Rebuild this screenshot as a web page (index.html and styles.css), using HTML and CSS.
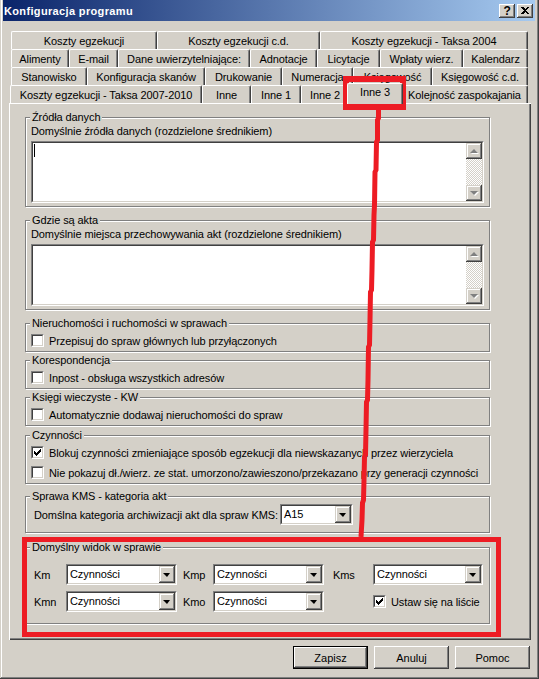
FILE: index.html
```html
<!DOCTYPE html>
<html lang="pl">
<head>
    <meta charset="UTF-8">
    <title>Konfiguracja programu</title>
    <link rel="stylesheet" href="styles.css">
</head>
<body>

<div class="window">
    <div class="titlebar">
        <span class="title">Konfiguracja programu</span>
        <div class="title-buttons">
            <div class="tb-btn">?</div>
            <div class="tb-btn">
                <svg width="8" height="7" viewBox="0 0 8 7" shape-rendering="crispEdges">
                    <path d="M0 0h2l2 2 2-2h2L5 3.5 8 7H6L4 5 2 7H0l3-3.5z" fill="#000"/>
                </svg>
            </div>
        </div>
    </div>

    <!-- zakładki, cztery rzędy -->
    <div class="tabs">
        <div class="tab-row row1">
            <div class="tab">Koszty egzekucji</div>
            <div class="tab">Koszty egzekucji c.d.</div>
            <div class="tab">Koszty egzekucji - Taksa 2004</div>
        </div>
        <div class="tab-row row2">
            <div class="tab">Alimenty</div>
            <div class="tab">E-mail</div>
            <div class="tab">Dane uwierzytelniające:</div>
            <div class="tab">Adnotacje</div>
            <div class="tab">Licytacje</div>
            <div class="tab">Wpłaty wierz.</div>
            <div class="tab">Kalendarz</div>
        </div>
        <div class="tab-row row3">
            <div class="tab">Stanowisko</div>
            <div class="tab">Konfiguracja skanów</div>
            <div class="tab">Drukowanie</div>
            <div class="tab">Numeracja</div>
            <div class="tab">Księgowość</div>
            <div class="tab">Księgowość c.d.</div>
        </div>
        <div class="tab-row row4">
            <div class="tab">Koszty egzekucji - Taksa 2007-2010</div>
            <div class="tab">Inne</div>
            <div class="tab">Inne 1</div>
            <div class="tab">Inne 2</div>
            <div class="tab active">Inne 3</div>
            <div class="tab">Kolejność zaspokajania</div>
        </div>
    </div>

    <div class="panel">
        <fieldset class="group">
            <legend>Źródła danych</legend>
            <div class="label">Domyślnie źródła danych (rozdzielone średnikiem)</div>
            <div class="memo">
                <div class="memo-in">
                    <div class="memo-text"><span class="caret"></span></div>
                    <div class="vscroll">
                        <div class="sb-btn"><span class="arrow-up"></span></div>
                        <div class="sb-track"></div>
                        <div class="sb-btn"><span class="arrow-down"></span></div>
                    </div>
                </div>
            </div>
        </fieldset>

        <fieldset class="group mt-7">
            <legend>Gdzie są akta</legend>
            <div class="label">Domyślnie miejsca przechowywania akt (rozdzielone średnikiem)</div>
            <div class="memo">
                <div class="memo-in">
                    <div class="memo-text"></div>
                    <div class="vscroll">
                        <div class="sb-btn"><span class="arrow-up"></span></div>
                        <div class="sb-track"></div>
                        <div class="sb-btn"><span class="arrow-down"></span></div>
                    </div>
                </div>
            </div>
        </fieldset>

        <fieldset class="group checks mt-7">
            <legend>Nieruchomości i ruchomości w sprawach</legend>
            <div class="check-row">
                <span class="checkbox"><span></span></span>
                Przepisuj do spraw głównych lub przyłączonych
            </div>
        </fieldset>

        <fieldset class="group checks mt-2">
            <legend>Korespondencja</legend>
            <div class="check-row">
                <span class="checkbox"><span></span></span>
                Inpost - obsługa wszystkich adresów
            </div>
        </fieldset>

        <fieldset class="group checks mt-2">
            <legend>Księgi wieczyste - KW</legend>
            <div class="check-row">
                <span class="checkbox"><span></span></span>
                Automatycznie dodawaj nieruchomości do spraw
            </div>
        </fieldset>

        <fieldset class="group checks mt-3">
            <legend>Czynności</legend>
            <div class="check-row">
                <span class="checkbox"><span><svg width="7" height="7" viewBox="0 0 7 7" shape-rendering="crispEdges"><path d="M0 2h1v1h1v1h1V3h1V2h1V1h1V0h1v3H6v1H5v1H4v1H3v1H2V6H1V5H0z"/></svg></span></span>
                Blokuj czynności zmieniające sposób egzekucji dla niewskazanych przez wierzyciela
            </div>
            <div class="check-row">
                <span class="checkbox"><span></span></span>
                Nie pokazuj dł./wierz. ze stat. umorzono/zawieszono/przekazano przy generacji czynności
            </div>
        </fieldset>

        <fieldset class="group mt-6 kms">
            <legend>Sprawa KMS - kategoria akt</legend>
            <div class="kms-row">
                <span class="kms-label">Domślna kategoria archiwizacji akt dla spraw KMS:</span>
                <div class="combo combo-short">
                    <div class="combo-in">
                        <span class="combo-val">A15</span>
                        <span class="combo-btn"><span class="arrow-dd"></span></span>
                    </div>
                </div>
            </div>
        </fieldset>

        <fieldset class="group mt-8 view">
            <legend>Domyślny widok w sprawie</legend>
            <div class="view-grid">
                <span class="lbl">Km</span>
                <div class="combo"><div class="combo-in"><span class="combo-val">Czynności</span><span class="combo-btn"><span class="arrow-dd"></span></span></div></div>
                <span class="lbl lbl-mid">Kmp</span>
                <div class="combo"><div class="combo-in"><span class="combo-val">Czynności</span><span class="combo-btn"><span class="arrow-dd"></span></span></div></div>
                <span class="lbl lbl-end">Kms</span>
                <div class="combo"><div class="combo-in"><span class="combo-val">Czynności</span><span class="combo-btn"><span class="arrow-dd"></span></span></div></div>

                <span class="lbl">Kmn</span>
                <div class="combo"><div class="combo-in"><span class="combo-val">Czynności</span><span class="combo-btn"><span class="arrow-dd"></span></span></div></div>
                <span class="lbl lbl-mid">Kmo</span>
                <div class="combo"><div class="combo-in"><span class="combo-val">Czynności</span><span class="combo-btn"><span class="arrow-dd"></span></span></div></div>
                <span class="lbl-end"></span>
                <div class="check-row">
                    <span class="checkbox"><span><svg width="7" height="7" viewBox="0 0 7 7" shape-rendering="crispEdges"><path d="M0 2h1v1h1v1h1V3h1V2h1V1h1V0h1v3H6v1H5v1H4v1H3v1H2V6H1V5H0z"/></svg></span></span>
                    Ustaw się na liście
                </div>
            </div>
        </fieldset>
    </div>

    <div class="buttons">
        <button class="btn default">Zapisz</button>
        <button class="btn">Anuluj</button>
        <button class="btn">Pomoc</button>
    </div>

    <!-- czerwone zaznaczenia -->
    <svg class="marks" width="539" height="679" viewBox="0 0 539 679">
        <rect x="346" y="79" width="57" height="28" fill="none" stroke="#ed1c24" stroke-width="6"/>
        <polyline fill="none" stroke="#ed1c24" stroke-width="5"
            points="378.5,108 378.5,118 377.5,120 377.5,140 376.5,142 376,170 375,172 374.5,205 374,215 373.5,240 372.5,242 372,270 371.5,290 370.5,292 370,320 369.5,345 368.5,347 368,380 367.5,400 366.5,402 366,430 365.5,455 364.5,457 364,480 363.5,500 362.5,503 362,520 361,537"/>
        <rect x="24.5" y="539.5" width="474" height="95" fill="none" stroke="#ed1c24" stroke-width="5"/>
    </svg>
</div>

</body>
</html>
```

FILE: styles.css
```css
* { box-sizing: border-box; }

body {
    margin: 0;
    background: #d4d0c8;
    font-family: "Liberation Sans", Arial, sans-serif;
    font-size: 11px;
    letter-spacing: -0.1px;
    color: #000;
}

.window {
    position: relative;
    width: 539px;
    height: 679px;
    padding: 0 4px 4px 3px;
    background: #d4d0c8;
    box-shadow: inset -1px -1px #404040, inset 1px 0 #d4d0c8, inset -2px -2px #808080, inset 2px 0 #fff;
}

/* Title bar */
.titlebar {
    height: 21px;
    display: flex;
    align-items: center;
    padding: 0 2px 0 1px;
    background: linear-gradient(to right, #0a246a, #a6caf0);
}
.title { color: #fff; font-weight: bold; letter-spacing: 0.35px; }
.title-buttons { margin-left: auto; display: flex; gap: 2px; }
.tb-btn {
    width: 16px;
    height: 14px;
    display: flex;
    align-items: center;
    justify-content: center;
    font-weight: bold;
    font-size: 12px;
    line-height: 14px;
    background: #d4d0c8;
    box-shadow: inset -1px -1px #404040, inset 1px 1px #fff, inset -2px -2px #808080;
}

/* Tabs */
.tabs { margin: 10px 0 0 7px; }
.tab-row { display: grid; height: 18px; }
.row1 { margin-left: 1px; grid-template-columns: 146px 163px 208px; }
.row2 { margin-left: 1px; grid-template-columns: 58px 49px 132px 67px 63px 83px 65px; }
.row3 { margin-left: 1px; grid-template-columns: 76px 118px 77px 71px 79px 96px; }
.row4 { grid-template-columns: 192px 49px 50px 48px 52px 127px; }
.tab {
    height: 18px;
    padding-top: 1px;
    border-top: 1px solid #fff;
    border-left: 1px solid #fff;
    border-right: 1px solid #404040;
    border-radius: 2px 2px 0 0;
    box-shadow: inset -1px 0 #808080;
    text-align: center;
    line-height: 16px;
    white-space: nowrap;
    overflow: hidden;
}
.tab.active {
    position: relative;
    z-index: 1;
    height: 21px;
    margin: -2px -2px -1px;
    padding-top: 0;
    background: #d4d0c8;
}

/* Tab page */
.panel {
    width: 522px;
    height: 537px;
    margin-left: 6px;
    padding: 8px 0 0 16px;
    box-shadow: inset 1px 1px #fff, inset -1px -1px #404040, inset -2px -2px #808080;
}

.group {
    width: 465px;
    min-width: 0;
    margin: 0;
    padding: 1px 5px 3px;
    border: 1px solid #808080;
    box-shadow: 1px 1px #fff, inset 1px 1px #fff;
}
.group legend {
    margin-left: -1px;
    padding: 0 2px;
    line-height: 13px;
    background: #d4d0c8;
}
.mt-2 { margin-top: 2px; }
.mt-3 { margin-top: 3px; }
.mt-6 { margin-top: 6px; }
.mt-7 { margin-top: 7px; }
.mt-8 { margin-top: 8px; }

.label { line-height: 13px; white-space: nowrap; }

/* Multi-line edit with scrollbar */
.memo {
    height: 62px;
    margin-top: 3px;
    border: 1px solid;
    border-color: #808080 #fff #fff #808080;
}
.memo-in {
    height: 100%;
    display: flex;
    border: 1px solid;
    border-color: #404040 #d4d0c8 #d4d0c8 #404040;
    background: #fff;
}
.memo-text { flex: 1; }
.caret { display: block; width: 1px; height: 13px; margin: 1px 0 0 1px; background: #000; }
.vscroll { width: 16px; display: flex; flex-direction: column; }
.sb-track {
    flex: 1;
    background: conic-gradient(#fff 25%, #d4d0c8 0 50%, #fff 0 75%, #d4d0c8 0);
    background-size: 2px 2px;
}
.sb-btn, .combo-btn {
    display: flex;
    align-items: center;
    justify-content: center;
    background: #d4d0c8;
    box-shadow: inset -1px -1px #404040, inset 1px 1px #d4d0c8, inset -2px -2px #808080, inset 2px 2px #fff;
}
.sb-btn { height: 16px; }
.arrow-up, .arrow-down {
    width: 0;
    height: 0;
    border-left: 4px solid transparent;
    border-right: 4px solid transparent;
    filter: drop-shadow(1px 1px 0 #fff);
}
.arrow-up { border-bottom: 4px solid #808080; }
.arrow-down { border-top: 4px solid #808080; }

/* Checkboxes */
.checks { padding-top: 2px; padding-bottom: 2px; }
.check-row {
    display: flex;
    align-items: center;
    gap: 5px;
    height: 17px;
    white-space: nowrap;
}
.check-row + .check-row { margin-top: 3px; }
.checkbox {
    flex: none;
    width: 13px;
    height: 13px;
    border: 1px solid;
    border-color: #808080 #fff #fff #808080;
}
.checkbox > span {
    display: block;
    height: 100%;
    padding: 1px;
    border: 1px solid;
    border-color: #404040 #d4d0c8 #d4d0c8 #404040;
    background: #fff;
}
.checkbox svg { display: block; }

/* Combo boxes */
.combo {
    height: 21px;
    border: 1px solid;
    border-color: #808080 #fff #fff #808080;
}
.combo-in {
    height: 100%;
    display: flex;
    border: 1px solid;
    border-color: #404040 #d4d0c8 #d4d0c8 #404040;
    background: #fff;
}
.combo-val { flex: 1; padding-left: 2px; line-height: 17px; white-space: nowrap; }
.combo-btn { width: 16px; }
.arrow-dd {
    width: 0;
    height: 0;
    margin-left: -1px;
    border-left: 4px solid transparent;
    border-right: 3px solid transparent;
    border-top: 4px solid #000;
}

.kms { padding-top: 1px; padding-bottom: 7px; }
.kms-row { display: flex; align-items: center; padding-left: 3px; }
.kms-label { width: 246px; white-space: nowrap; }
.combo-short { width: 73px; }

.view { padding-top: 10px; padding-bottom: 11px; }
.view-grid {
    display: grid;
    grid-template-columns: 35px 111px 36px 111px 49px 110px;
    grid-auto-rows: 21px;
    row-gap: 6px;
    align-items: center;
}
.lbl { padding-left: 3px; }
.lbl-mid { padding-left: 6px; }
.lbl-end { padding-left: 9px; }

/* Dialog buttons */
.buttons {
    display: flex;
    justify-content: flex-end;
    gap: 6px;
    margin-top: 6px;
    padding-right: 5px;
}
.btn {
    width: 75px;
    height: 23px;
    padding: 0;
    border: 0;
    font: inherit;
    color: #000;
    background: #d4d0c8;
    box-shadow: inset -1px -1px #404040, inset 1px 1px #fff, inset -2px -2px #808080;
}
.btn.default {
    box-shadow: inset 0 0 0 1px #000, inset -2px -2px #404040, inset 2px 2px #fff, inset -3px -3px #808080;
}

.marks { position: absolute; left: 0; top: 0; pointer-events: none; }
```
